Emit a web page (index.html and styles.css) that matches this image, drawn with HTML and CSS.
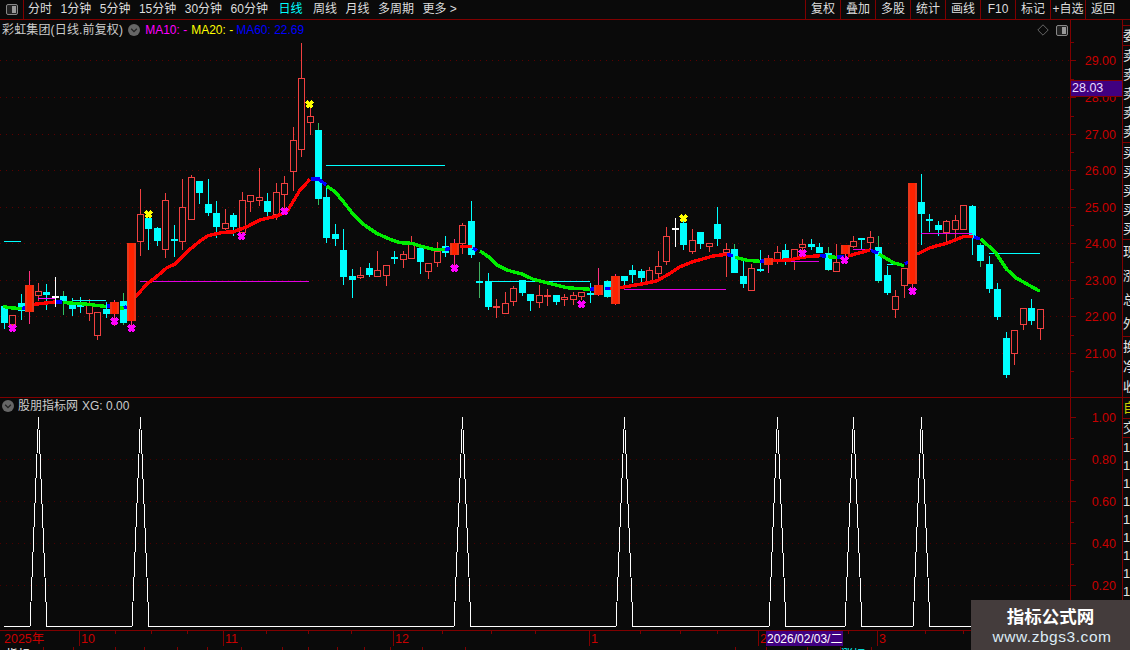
FILE: index.html
```html
<!DOCTYPE html>
<html lang="zh">
<head>
<meta charset="utf-8">
<title>彩虹集团</title>
<link rel="stylesheet" href="styles.css">
</head>
<body>
<div class="app">
  <header class="topbar">
    <div class="layout-btn"><span class="panel-icon"><i></i></span></div>
    <nav class="periods">
      <span>分时</span><span>1分钟</span><span>5分钟</span><span>15分钟</span><span>30分钟</span><span>60分钟</span>
      <span class="active">日线</span><span>周线</span><span>月线</span><span>多周期</span><span>更多 &gt;</span>
    </nav>
    <div class="tools">
      <span>复权</span><span>叠加</span><span>多股</span><span>统计</span><span>画线</span><span>F10</span><span>标记</span><span>+自选</span><span class="back">返回</span>
    </div>
  </header>
  <div class="workspace">
    <main class="charts">
      <section class="pane pane-main">
        <svg id="mainChart" class="chart" viewBox="0 20 1122 377" width="1122" height="377"></svg>
        <div class="legend">
          <span class="stock">彩虹集团(日线.前复权)</span>
          <span class="chev"><svg viewBox="0 0 12 12" width="12" height="12"><circle cx="6" cy="6" r="6" fill="#666"/><path d="M3.2 4.8 6 7.6 8.8 4.8" fill="none" stroke="#222" stroke-width="1.3"/></svg></span>
          <span class="ma10">MA10: -</span><span class="ma20">MA20: -</span><span class="ma60">MA60: 22.69</span>
        </div>
        <div class="corner">
          <svg viewBox="0 0 12 12" width="12" height="12"><path d="M6 .8 11.2 6 6 11.2 .8 6Z" fill="none" stroke="#666"/></svg>
          <span class="panel-icon"><i></i></span>
        </div>
        <div class="price-tag">28.03</div>
      </section>
      <section class="pane pane-sub">
        <svg id="subChart" class="chart" viewBox="0 398 1122 232" width="1122" height="232"></svg>
        <div class="legend legend-sub">
          <span class="chev"><svg viewBox="0 0 12 12" width="12" height="12"><circle cx="6" cy="6" r="6" fill="#666"/><path d="M3.2 4.8 6 7.6 8.8 4.8" fill="none" stroke="#222" stroke-width="1.3"/></svg></span>
          <span class="stock">股朋指标网</span><span class="xg">XG: 0.00</span>
        </div>
      </section>
      <svg id="timeAxis" class="chart time-axis" viewBox="0 631 1122 16" width="1122" height="16"></svg>
      <svg id="footerRow" class="chart footer-row" viewBox="0 647 1122 3" width="1122" height="3"></svg>
    </main>
    <aside class="side">
      <div class="sec sec-gap"></div>
      <div class="sec sec-one"><span>委</span></div>
      <div class="sec sec-five"><span>卖</span><span>卖</span><span>卖</span><span>卖</span><span>卖</span></div>
      <div class="sec sec-five"><span>买</span><span>买</span><span>买</span><span>买</span><span>买</span></div>
      <div class="sec sec-five"><span>现</span><span>涨</span><span>总</span><span>外</span></div>
      <div class="sec sec-rest"><span>换</span><span>净</span><span>收</span></div>
      <div class="sec sec-self"><span>自</span></div>
      <div class="sec sec-deal"><span>交</span></div>
      <div class="sec sec-list"><span>1</span><span>1</span><span>1</span><span>1</span><span>1</span><span>1</span><span>1</span><span>1</span><span>1</span><span>1</span><span>1</span></div>
    </aside>
  </div>
  <div class="watermark">
    <strong>指标公式网</strong>
    <span>www.zbgs3.com</span>
  </div>
</div>
<script src="chart.js"></script>
</body>
</html>
```
FILE: styles.css
```css
* { box-sizing: border-box; }
html, body { margin: 0; padding: 0; background: #0a0a0a; }
body {
  width: 1130px; height: 650px; overflow: hidden;
  font-family: "Liberation Sans", "Noto Sans CJK SC", sans-serif;
  font-size: 12px; color: #ddd;
}
.app { position: relative; width: 1130px; height: 650px; display: flex; flex-direction: column; }

.topbar { height: 20px; display: flex; align-items: stretch; border-bottom: 1px solid #800000; line-height: 18px; flex: none; }
.layout-btn { width: 24px; border-right: 1px solid #800000; display: flex; align-items: center; justify-content: center; }
.panel-icon { display: block; width: 12px; height: 11px; border: 1px solid #888; border-radius: 2px; background: #222; position: relative; }
.panel-icon i { position: absolute; right: 1px; top: 1px; bottom: 1px; width: 4px; background: #999; }
.periods { display: flex; gap: 8.5px; padding-left: 4px; white-space: nowrap; }
.periods .active { color: #00ffff; margin: 0 2px; }
.tools { margin-left: auto; display: flex; }
.tools span { width: 35px; border-left: 1px solid #800000; text-align: center; white-space: nowrap; }
.tools .back { width: 45px; padding-right: 10px; }

.workspace { flex: 1; display: flex; min-height: 0; }
.charts { width: 1122px; flex: none; display: flex; flex-direction: column; }
.pane { position: relative; flex: none; }
.pane-main { height: 378px; border-bottom: 1px solid #800000; }
.pane-sub { height: 233px; border-bottom: 1px solid #800000; }
.chart { display: block; }
.footer-row { flex: none; }

.legend { position: absolute; left: 2px; top: 1px; height: 18px; display: flex; align-items: center; white-space: nowrap; line-height: 18px; }
.stock { color: #ccc; }
.legend > .stock:first-child { letter-spacing: .15px; }
.chev { display: block; width: 12px; height: 12px; margin-left: 5px; }
.chev svg { display: block; }
.ma10 { color: #ff00ff; margin-left: 5px; width: 46px; }
.ma20 { color: #ffff00; width: 45px; }
.ma60 { color: #0000ff; }
.legend-sub { top: -1px; }
.legend-sub .chev { margin-left: 0; margin-right: 4px; }
.legend-sub .stock { letter-spacing: 0; }
.xg { margin-left: 4px; color: #ccc; }

.corner { position: absolute; right: 54px; top: 4px; display: flex; align-items: center; gap: 7px; }
.corner svg { display: block; }
.price-tag {
  position: absolute; left: 1071px; top: 60px; width: 51px; height: 17px;
  background: #400080; border-top: 1px solid #800000; border-bottom: 1px solid #800000;
  color: #e8dcff; line-height: 15px; padding-left: 1px; font-size: 12.5px;
}

.side { flex: 1; border-left: 1px solid #800000; overflow: hidden; display: flex; flex-direction: column; color: #e4e4e4; font-size: 13px; }
.sec { flex: none; overflow: hidden; border-bottom: 1px solid #800000; display: flex; flex-direction: column; }
.sec span { flex: 1; line-height: 18px; display: flex; align-items: center; }
.sec-gap { height: 6px; }
.sec-one { height: 20px; }
.sec-five { height: 97px; }
.sec-rest { height: 61px; }
.sec-self { height: 21px; color: #cccc00; }
.sec-deal { height: 19px; }
.sec-list { border-bottom: 0; height: 213px; padding-top: 1px; }
.sec-list span { flex: none; height: 18px; }

.watermark {
  position: absolute; right: 0; bottom: 0; width: 159px; height: 50px;
  background: #443c3c; display: flex; flex-direction: column; align-items: center; padding: 4px 0 0 0;
}
.watermark strong { color: #fff; font-size: 17.5px; line-height: 24px; font-family: "Noto Sans CJK SC", sans-serif; }
.watermark span { color: #dcebf5; font-size: 15.5px; line-height: 17px; letter-spacing: .55px; padding-left: 3px; }
```
FILE: chart.js
```js
var NS = 'http://www.w3.org/2000/svg';
function el(parent, tag, attrs, text) {
  var n = document.createElementNS(NS, tag);
  for (var k in attrs) n.setAttribute(k, attrs[k]);
  if (text !== undefined) n.textContent = text;
  parent.appendChild(n);
  return n;
}
function line(p, x1, y1, x2, y2, color, extra) {
  var a = { x1: x1, y1: y1, x2: x2, y2: y2, stroke: color, 'shape-rendering': 'crispEdges' };
  if (extra) for (var k in extra) a[k] = extra[k];
  return el(p, 'line', a);
}
var RED = '#800000', LABEL = '#c80000', CYAN = '#00ffff', HOLLOW = '#f04040';
var FONT = '"Liberation Sans", "Noto Sans CJK SC", sans-serif';

/* kind, wickTop, bodyTop, bodyBottom, wickBottom */
var candles = [
['c',306,306,323,329],['h',315,315,324,327],['c',294,303,311,320],['s',271,285,312,323],['h',283,291,295,301],
['c',284,292,295,310],['wx',277,296,296,307],['g',291,296,301,315],['c',298,303,309,316],['c',297,303,307,313],
['h',299,305,313,321],['h',312,312,335,340],['c',302,309,314,318],['s',300,302,314,325],['g',293,301,323,325],
['s',243,243,321,325],['h',189,214,241,256],['c',218,218,229,250],['c',227,228,241,246],['h',193,200,249,258],
['cx',225,239,239,257],['h',179,207,241,250],['h',175,177,219,219],['c',181,181,193,204],['c',179,204,213,216],
['c',201,213,227,238],['h',209,223,228,230],['c',213,215,227,236],['h',192,200,232,236],['h',195,195,201,212],
['h',168,197,200,206],['c',193,201,212,217],['h',183,192,214,220],['h',176,183,194,211],['h',127,140,171,191],
['h',43,78,149,157],['h',105,116,122,135],['g',123,130,199,205],['c',186,197,238,243],['c',224,234,239,246],
['c',229,250,277,285],['c',269,276,280,298],['h',267,275,277,279],['c',263,268,275,277],['h',251,270,276,277],
['h',265,265,275,286],['cx',251,257,257,264],['h',251,254,259,268],['h',236,244,258,258],['c',248,248,262,274],
['h',263,263,271,279],['h',242,251,262,267],['c',236,246,253,257],['s',239,243,255,268],['h',223,225,243,254],
['c',201,221,255,258],['gx',262,281,281,298],['c',273,281,307,310],['rx',299,306,306,318],['h',292,303,313,313],
['h',286,288,301,306],['c',280,280,293,296],['c',294,294,301,311],['h',285,295,302,308],['rx',289,295,295,306],
['c',295,295,302,305],['h',294,297,299,306],['h',292,295,299,305],['h',292,292,296,300],['cx',283,293,293,303],
['s',268,285,295,295],['g',280,281,297,298],['s',274,276,304,304],['c',276,276,281,286],['c',265,270,275,283],
['c',269,271,278,282],['h',267,270,281,281],['h',251,266,273,280],['h',227,236,261,265],['wx',218,228,228,247],
['c',218,223,245,250],['h',229,240,251,254],['c',232,232,244,249],['h',243,243,246,252],['c',207,224,239,246],
['h',243,249,252,277],['g',244,249,273,273],['c',261,276,284,288],['h',264,268,290,291],['cx',250,269,269,272],
['s',255,258,265,272],['h',246,252,259,264],['c',244,250,259,265],['h',249,249,259,270],['h',239,244,247,256],
['c',239,244,247,250],['c',243,247,253,253],['g',247,253,270,271],['h',244,262,271,271],['s',245,245,254,258],
['h',236,241,246,248],['cx',238,238,238,250],['h',231,237,242,250],['g',236,247,281,283],['c',266,275,293,295],
['h',290,296,309,318],['h',268,268,285,298],['s',183,183,284,288],['c',174,202,214,245],['cx',214,219,219,232],
['c',221,225,230,236],['h',220,221,232,242],['h',215,220,229,239],['h',205,205,229,229],['c',205,206,238,255],
['g',243,245,261,267],['c',256,264,289,293],['c',283,289,317,320],['c',332,338,375,378],['h',330,330,353,365],
['h',308,308,324,330],['c',299,308,321,325],['h',309,309,328,340]
];
function cx(i) { return Math.floor(4.3 + 8.492 * i) + 0.5; }

var segs = [
['#00ee00',[[3,306.5],[12,308],[22,308.5]]],['#0000ff',[[22,308.5],[26,307.5]]],
['#ff0000',[[33,304.5],[55,302]]],['#0000ff',[[56,302],[62,302]]],
['#00ee00',[[63,302.5],[85,304],[106,306.5]]],['#0000ff',[[107,306],[110,306]]],
['#00ee00',[[120,308],[124,308]]],['#0000ff',[[124,308],[127,306.7]]],
['#ff0000',[[135,296.7],[140,291.7],[148,283],[155,278],[167,267.7],[175,264],[190,249.3],[200,241],[208,235.7],[223,232.3],[233,232],[247,226.7],[260,220],[277,216],[287,211.7],[293,201.7],[300,190],[310,179.3]]],
['#0000ff',[[311,179],[320,179]]],['#0000ff',[[320,180],[326,185]]],
['#00ee00',[[326.7,186],[335,191.7],[343.3,201.7],[353.3,214.3],[363.3,224.3],[376.7,233.3],[390,239.3],[400,242.7],[411.7,243.3],[420,246],[433.3,249.3],[445,249.3]]],
['#0000ff',[[445,249.3],[450,248.7]]],['#ff0000',[[460,246.7],[472,246.7]]],['#0000ff',[[473,248],[477,250.7]]],
['#00ee00',[[480,251],[488.3,256.7],[496.7,265],[506.7,270],[521.7,274],[533.3,279.3],[553.3,284.3],[566.7,287.7],[590,289.3]]],
['#0000ff',[[590,289.3],[595,289]]],['#0000ff',[[605,288.7],[610,288.7]]],
['#ff0000',[[610,288.7],[620,287.7],[640,284.3],[656.7,281],[670,273.3],[680,266.7],[693,261.7],[713,256],[727,254.3]]],
['#0000ff',[[727,254.5],[733,255.7]]],['#00ee00',[[735,257.3],[746.7,260.3],[760,261.3]]],['#0000ff',[[760,261.3],[764,261]]],
['#ff0000',[[765,260.7],[790,260],[803.3,257],[820,255.7]]],['#0000ff',[[820,255.7],[826,256]]],
['#00ee00',[[828,256.7],[836.7,257.3]]],['#0000ff',[[837,257],[844,256.7]]],
['#ff0000',[[848,256],[870,250]]],['#0000ff',[[871,250.5],[878,253]]],
['#00ee00',[[879,254],[893.3,262.7],[904,265.7]]],['#0000ff',[[905,264],[908,262]]],
['#ff0000',[[917,254.3],[930,247.7],[946.7,243.3],[963.3,236.7],[973,236.7]]],['#0000ff',[[974,237],[980,239]]],
['#00ee00',[[980.7,239],[995,251.7],[1006.7,269.3],[1016.7,278.3],[1040,291.3]]]
];
var hlines = [
[4,21,241,CYAN],[73,106,300,CYAN],[38,55,298,'#ff00ff'],[140,309,281,'#e000e0'],[326,445,165,CYAN],
[461,472,247,'#ff00ff'],[488,590,281,CYAN],[624,726,289,'#e000e0'],[785,819,261,'#e000e0'],[853,872,249,'#e000e0'],
[887,903,264,CYAN],[921,972,233,'#e000e0'],[989,1040,253,CYAN]
];
var markers = [
[12,328,'#ff00ff'],[114,321,'#ff00ff'],[131,328,'#ff00ff'],[148,214,'#ffff00'],[241,236,'#ff00ff'],[284,211,'#ff00ff'],
[309,104,'#ffff00'],[454,268,'#ff00ff'],[581,304,'#ff00ff'],[683,218,'#ffff00'],[802,253,'#ff00ff'],[844,260,'#ff00ff'],[912,291,'#ff00ff']
];

/* ---------- main pane ---------- */
var m = document.getElementById('mainChart');
[60,97,134,170,207,243,280,316,353].forEach(function (y) {
  line(m, 0, y + .5, 1070, y + .5, '#5c0000', { 'stroke-dasharray': '1 5' });
});
function drawCandle(c, i) {
  var x = cx(i), k = c[0];
  if (k === 's') {
    line(m, x, c[1], x, c[4] + 1, '#ff3080');
    el(m, 'rect', { x: x - 4.5, y: c[2], width: 9, height: c[3] - c[2], fill: '#e8381c', 'shape-rendering': 'crispEdges' });
    el(m, 'rect', { x: x - 2.5, y: c[2], width: 5, height: c[3] - c[2], fill: '#ff2200', 'shape-rendering': 'crispEdges' });
  } else if (k === 'h') {
    line(m, x, c[1], x, c[2], HOLLOW);
    line(m, x, c[3], x, c[4], HOLLOW);
    el(m, 'rect', { x: x - 3, y: c[2] + .5, width: 6, height: c[3] - c[2], fill: '#0a0a0a', stroke: HOLLOW, 'shape-rendering': 'crispEdges' });
  } else if (k === 'cx' || k === 'rx' || k === 'wx' || k === 'gx') {
    var col = k === 'rx' ? HOLLOW : k === 'wx' ? '#ffffff' : CYAN;
    line(m, x, c[1], x, c[4], k === 'gx' ? '#40b060' : col);
    el(m, 'rect', { x: x - 3.5, y: c[2] - .5, width: 7, height: 2, fill: col, 'shape-rendering': 'crispEdges' });
  } else {
    line(m, x, c[1], x, c[4], k === 'g' ? '#30c060' : CYAN);
    el(m, 'rect', { x: x - 3.5, y: c[2], width: 7, height: c[3] - c[2], fill: CYAN, 'shape-rendering': 'crispEdges' });
    if (k === 'g') { line(m, x, c[1], x, c[2], '#30c060'); line(m, x, c[3], x, c[4], '#30c060'); }
  }
}
candles.forEach(function (c, i) { if (c[0] !== 's') drawCandle(c, i); });
hlines.forEach(function (h) { line(m, h[0], h[2] + .5, h[1], h[2] + .5, h[3]); });
segs.forEach(function (s) {
  el(m, 'polyline', { points: s[1].map(function (p) { return p.join(','); }).join(' '), fill: 'none', stroke: s[0], 'stroke-width': 3.4, 'shape-rendering': 'crispEdges' });
});
candles.forEach(function (c, i) { if (c[0] === 's') drawCandle(c, i); });
markers.forEach(function (k) {
  var o = { 'stroke-width': 3, 'shape-rendering': 'crispEdges' };
  var x = k[0] + .5, y = k[1] + .5;
  line(m, x - 3, y - 3, x + 3, y + 3, k[2], o);
  line(m, x - 3, y + 3, x + 3, y - 3, k[2], o);
});
/* price axis */
function axis(svg, top, bottom, ticks, half) {
  el(svg, 'rect', { x: 1070, y: top, width: 1, height: bottom - top, fill: RED, 'shape-rendering': 'crispEdges' });
  ticks.forEach(function (t) {
    line(svg, 1071, t[0] + .5, 1076, t[0] + .5, RED);
    el(svg, 'text', { x: 1116, y: t[0] + 5, 'text-anchor': 'end', fill: LABEL, 'font-family': FONT, 'font-size': 12.5 }, t[1]);
  });
  half.forEach(function (y) { line(svg, 1071, y + .5, 1074, y + .5, RED); });
}
axis(m, 20, 397,
  [[60,'29.00'],[97,'28.00'],[134,'27.00'],[170,'26.00'],[207,'25.00'],[243,'24.00'],[280,'23.00'],[316,'22.00'],[353,'21.00']],
  [42,79,116,152,189,225,262,298,335,371]);

/* ---------- indicator pane ---------- */
var s = document.getElementById('subChart');
[459,501,543,585].forEach(function (y) {
  line(s, 0, y + .5, 1070, y + .5, '#4a0000', { 'stroke-dasharray': '1 5' });
});
var peaks = [4,16,54,73,91,100,108], pts = ['4,626.5'];
peaks.forEach(function (i) {
  var x = cx(i);
  pts.push((x - 8.5) + ',626.5', x + ',417', (x + 8.5) + ',626.5');
});
pts.push('1040,626.5');
el(s, 'polyline', { points: pts.join(' '), fill: 'none', stroke: '#ffffff', 'stroke-width': 1, 'shape-rendering': 'crispEdges' });
axis(s, 398, 630, [[417,'1.00'],[459,'0.80'],[501,'0.60'],[543,'0.40'],[585,'0.20']], [438,480,522,564,606]);

/* ---------- time axis ---------- */
var t = document.getElementById('timeAxis');
[[4,'2025年',0],[81,'10',79],[225,'11',223],[395,'12',393],[591,'1',589],[760,'2',758],[879,'3',877]].forEach(function (a) {
  if (a[2]) line(t, a[2] + .5, 631, a[2] + .5, 646, RED);
  el(t, 'text', { x: a[0], y: 643, fill: LABEL, 'font-family': FONT, 'font-size': 12.5 }, a[1]);
});
[115,151,187,266,308,351,442,491,535,640,680,717,848,925,963,1010].forEach(function (x) {
  line(t, x + .5, 631, x + .5, 634, RED);
});
line(t, 1070.5, 631, 1070.5, 646, RED);
el(t, 'rect', { x: 766, y: 631, width: 77, height: 15, fill: '#400080', 'shape-rendering': 'crispEdges' });
el(t, 'text', { x: 767, y: 643, fill: '#ffffff', 'font-family': FONT, 'font-size': 12 }, '2026/02/03/二');

/* ---------- bottom row ---------- */
var f = document.getElementById('footerRow');
[43,73,115,144,177,207,241,282,308,337,364,390,422,465,735,766,807,840,871].forEach(function (x) {
  line(f, x + .5, 647, x + .5, 650, RED);
});
el(f, 'text', { x: 6, y: 658.5, fill: '#fff', 'font-family': FONT, 'font-size': 12 }, '指标');
el(f, 'text', { x: 841, y: 658.5, fill: CYAN, 'font-family': FONT, 'font-size': 12 }, '涨幅');
```
